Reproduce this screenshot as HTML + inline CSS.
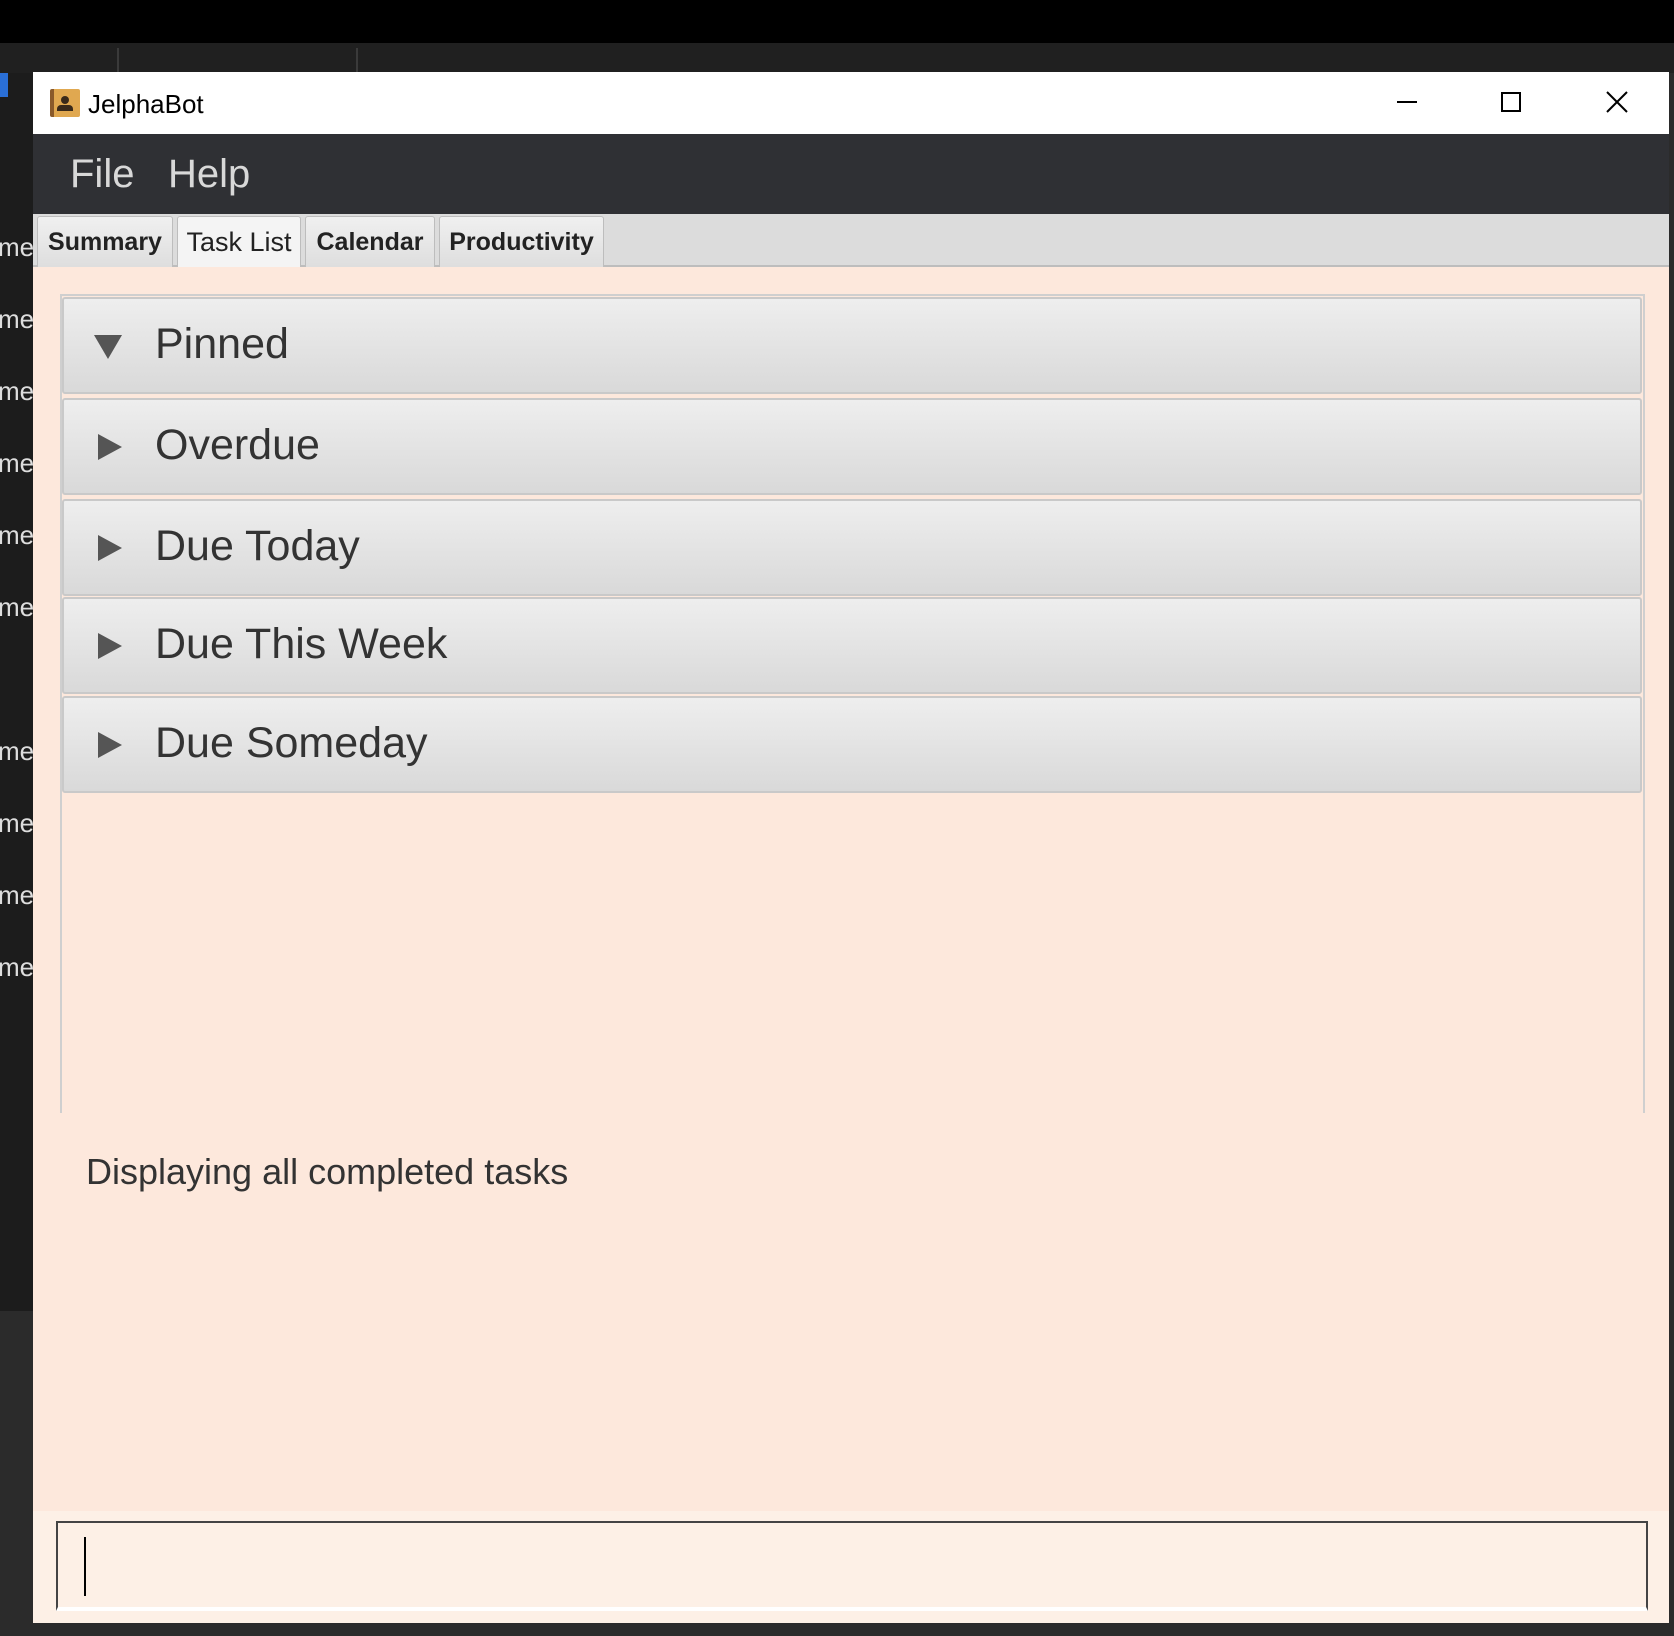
<!DOCTYPE html>
<html><head><style>
*{margin:0;padding:0;box-sizing:border-box}
body{width:1674px;height:1636px;background:#2b2b2b;position:relative;overflow:hidden;font-family:"Liberation Sans",sans-serif}
.a{position:absolute}
.me{position:absolute;left:-2px;color:#ddd;font-size:26px}
.tab{position:absolute;top:216px;height:51px;border:1px solid #bdbdbd;border-bottom:none;background:linear-gradient(#f0f0f0,#dedede);font-size:25px;color:#222;text-align:center;line-height:50px;font-weight:bold;border-radius:3px 3px 0 0}
.hd{position:absolute;left:62px;width:1580px;height:97px;background:linear-gradient(#eeeeee,#d9d9d9);border:2px solid #c9c9c9;border-radius:3px;font-size:43px;color:#333}
.hd span{position:absolute;left:91px;top:21px}
.tri{position:absolute;left:34px;top:34px;width:0;height:0}
.r{border-top:13px solid transparent;border-bottom:13px solid transparent;border-left:24px solid #555}
.d{left:30px;top:36px;border-left:14px solid transparent;border-right:14px solid transparent;border-top:24px solid #555}
</style></head><body>
<div class="a" style="left:0;top:0;width:1674px;height:43px;background:#000"></div>
<div class="a" style="left:0;top:43px;width:1674px;height:30px;background:#202020"></div>
<div class="a" style="left:117px;top:48px;width:2px;height:25px;background:#3a3a3a"></div>
<div class="a" style="left:356px;top:48px;width:2px;height:25px;background:#3a3a3a"></div>
<div class="a" style="left:0;top:73px;width:33px;height:1238px;background:#1c1c1c"></div>
<div class="a" style="left:0;top:73px;width:8px;height:24px;background:#2a6fd6"></div>
<div class="me" style="top:232px">me</div><div class="me" style="top:304px">me</div><div class="me" style="top:376px">me</div><div class="me" style="top:448px">me</div><div class="me" style="top:520px">me</div><div class="me" style="top:592px">me</div><div class="me" style="top:736px">me</div><div class="me" style="top:808px">me</div><div class="me" style="top:880px">me</div><div class="me" style="top:952px">me</div>
<div class="a" style="left:33px;top:72px;width:1636px;height:62px;background:#fff"></div>
<div class="a" style="left:50px;top:89px;width:30px;height:28px;background:linear-gradient(90deg,#8a5a2a 0 4px,#e0a850 4px);border-radius:2px"></div>
<div class="a" style="left:61px;top:96px;width:8px;height:8px;background:#3a2a1a;border-radius:50%"></div>
<div class="a" style="left:57px;top:105px;width:16px;height:6px;background:#3a2a1a;border-radius:4px 4px 0 0"></div>
<div class="a" style="left:88px;top:89px;font-size:26px;color:#000">JelphaBot</div>
<div class="a" style="left:1397px;top:101px;width:20px;height:2px;background:#000"></div>
<div class="a" style="left:1501px;top:92px;width:20px;height:20px;border:2px solid #000"></div>
<svg class="a" style="left:1606px;top:91px" width="22" height="22"><path d="M1 1L21 21M21 1L1 21" stroke="#000" stroke-width="2"/></svg>
<div class="a" style="left:33px;top:134px;width:1636px;height:80px;background:#2f3034"></div>
<div class="a" style="left:70px;top:152px;font-size:40px;color:#d8d8d8">File</div>
<div class="a" style="left:168px;top:152px;font-size:40px;color:#d8d8d8">Help</div>
<div class="a" style="left:33px;top:214px;width:1636px;height:53px;background:#dcdcdc;border-bottom:2px solid #bdbdbd"></div>
<div class="tab" style="left:37px;width:136px">Summary</div>
<div class="tab" style="left:177px;width:124px;background:#f4f4f4;font-weight:normal;height:53px;font-size:27px">Task List</div>
<div class="tab" style="left:305px;width:130px">Calendar</div>
<div class="tab" style="left:439px;width:165px">Productivity</div>
<div class="a" style="left:33px;top:267px;width:1636px;height:1244px;background:#fde8dc"></div>
<div class="a" style="left:33px;top:1511px;width:1636px;height:112px;background:#fdf0e6"></div>
<div class="a" style="left:60px;top:294px;width:1585px;height:819px;border:2px solid #cfcfcf;border-bottom:none"></div>
<div class="hd" style="top:297px"><div class="tri d"></div><span>Pinned</span></div>
<div class="hd" style="top:398px"><div class="tri r"></div><span>Overdue</span></div>
<div class="hd" style="top:499px"><div class="tri r"></div><span>Due Today</span></div>
<div class="hd" style="top:597px"><div class="tri r"></div><span>Due This Week</span></div>
<div class="hd" style="top:696px"><div class="tri r"></div><span>Due Someday</span></div>
<div class="a" style="left:86px;top:1151px;font-size:36px;color:#333">Displaying all completed tasks</div>
<div class="a" style="left:56px;top:1521px;width:1592px;height:90px;border:2px solid #444;border-bottom:4px solid #fff;background:#fdf0e6"></div>
<div class="a" style="left:84px;top:1537px;width:2px;height:59px;background:#000"></div>
</body></html>
